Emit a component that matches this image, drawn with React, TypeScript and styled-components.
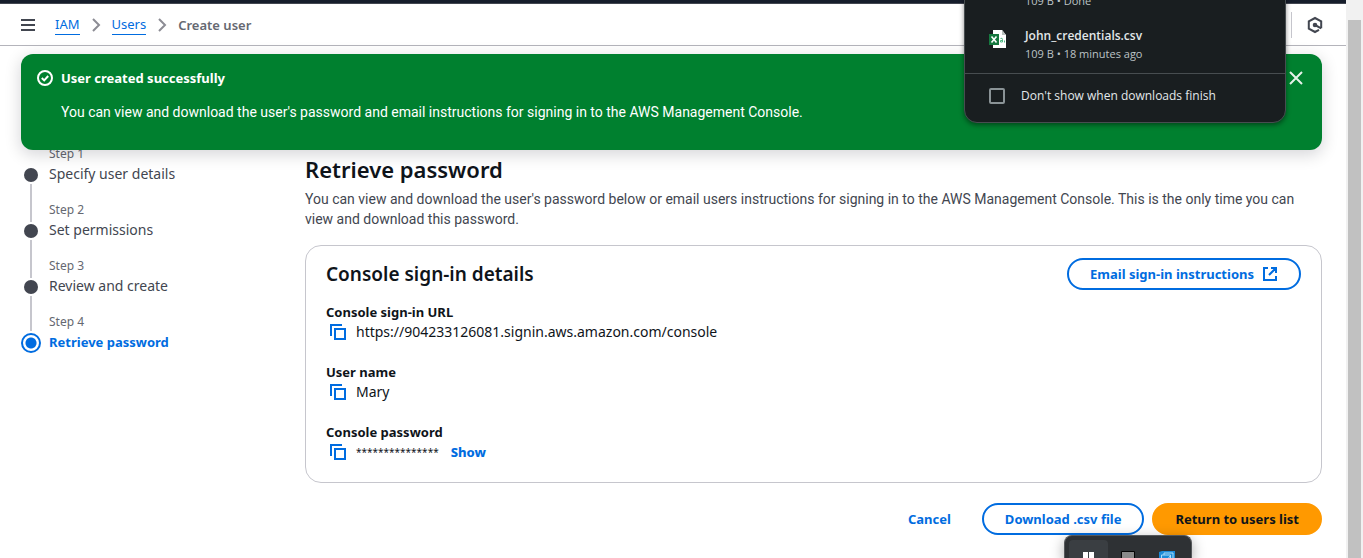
import React from 'react';
import styled, { createGlobalStyle, css } from 'styled-components';

const ui = `'Noto Sans', 'Open Sans', sans-serif`;
const prose = `Roboto, 'Noto Sans', sans-serif`;
const blue = '#006ce0';
const ink = '#0f141a';
const slate = '#424650';

const GlobalStyle = createGlobalStyle`
  *, *::before, *::after { box-sizing: border-box; }
  body { margin: 0; background: #fff; color: ${ink}; font: 400 14px/20px ${ui}; overflow: hidden; }
  h1, h2, p, dl, dd, dt, ol { margin: 0; padding: 0; }
  button { font-family: inherit; cursor: pointer; margin: 0; }
  svg { display: block; flex: none; }
`;

const Screen = styled.div`
  position: relative;
  display: flex;
  height: 100vh;
  overflow: hidden;
`;

const Page = styled.div`
  flex: 1;
  min-width: 0;
`;

const Scrollbar = styled.div`
  width: 17px;
  padding: 20px 2px 0;
  background: #f1f1f1;
`;

const ScrollThumb = styled.div`
  height: 100%;
  background: #c1c1c1;
`;

const GlobalNav = styled.div`
  height: 4px;
  background: #161d2b;
  border-bottom: 1px solid #424650;
`;

const Header = styled.header`
  display: flex;
  align-items: center;
  height: 42px;
  padding: 0 22px 0 20px;
  border-bottom: 1px solid #b4b4bb;
`;

const IconButton = styled.button`
  display: flex;
  padding: 0;
  border: 0;
  background: none;
  color: ${slate};
`;

const Breadcrumbs = styled.nav`
  display: flex;
  flex: 1;
  align-items: center;
  gap: 11px;
  margin-left: 19px;
  color: #8c8c94;
  font-size: 13px;
`;

const CrumbLink = styled.a`
  line-height: 19px;
  border-bottom: 1px solid ${blue};
  color: ${blue};
  text-decoration: none;
`;

const CurrentCrumb = styled.span`
  font-weight: 600;
  color: #656871;
`;

const HeaderTool = styled.div`
  display: flex;
  align-items: center;
  height: 26px;
  padding-left: 15px;
  border-left: 1px solid #c6c6cd;
`;

const Flash = styled.section`
  position: relative;
  z-index: 1;
  display: flex;
  align-items: flex-start;
  gap: 8px;
  min-height: 96px;
  margin: 8px 24px 0 21px;
  padding: 14px 18px 14px 16px;
  border-radius: 12px;
  background: #00802f;
  color: #fff;
  box-shadow: 0 4px 16px 1px rgba(0, 7, 22, 0.16);

  > svg, > button { margin-top: 2px; }
`;

const FlashBody = styled.div`
  flex: 1;
  display: flex;
  flex-direction: column;
  gap: 14px;
`;

const FlashTitle = styled.div`
  font-size: 13px;
  font-weight: 700;
`;

const FlashText = styled.p`
  font-family: ${prose};
`;

const Wizard = styled.div`
  display: flex;
  margin-top: -4px;
  padding: 0 24px 0 21px;
`;

const Steps = styled.ol`
  width: 284px;
  flex: none;
  list-style: none;
`;

const Step = styled.li`
  display: flex;
  gap: 8px;
  height: 58px;
  margin-bottom: -2px;
`;

const Track = styled.div`
  display: flex;
  flex-direction: column;
  align-items: center;
  gap: 2px;
  width: 20px;
  height: 56px;
`;

const Rail = styled.span<{ $length: number; $hidden?: boolean }>`
  width: 2px;
  height: ${p => p.$length}px;
  background: ${p => (p.$hidden ? 'transparent' : '#c6c6cd')};
`;

const Dot = styled.span<{ $active?: boolean }>`
  flex: none;
  border-radius: 50%;
  ${p =>
    p.$active
      ? css`
          width: 20px;
          height: 20px;
          border: 2px solid ${blue};
          background: radial-gradient(circle, ${blue} 5px, #fff 6px);
        `
      : css`
          width: 14px;
          height: 14px;
          background: ${slate};
        `}
`;

const StepText = styled.div<{ $active?: boolean }>`
  display: flex;
  flex-direction: column;
  gap: 2px;
  color: ${p => (p.$active ? blue : slate)};
  font-size: ${p => (p.$active ? 13 : 14)}px;
  font-weight: ${p => (p.$active ? 700 : 400)};
`;

const StepNumber = styled.span`
  color: #656871;
  font-size: 12px;
  font-weight: 400;
  line-height: 16px;
`;

const Main = styled.main`
  flex: 1;
  min-width: 0;
  padding-top: 8px;
`;

const Title = styled.h1`
  font-size: 22px;
  font-weight: 600;
  line-height: 30px;
`;

const Description = styled.p`
  margin: 5px 0 16px;
  color: ${slate};
  font-family: ${prose};
`;

const Card = styled.section`
  padding: 12px 20px 20px;
  border: 1px solid #c6c6cd;
  border-radius: 16px;
`;

const CardHeader = styled.div`
  display: flex;
  align-items: center;
  justify-content: space-between;
  margin-bottom: 12px;
`;

const CardTitle = styled.h2`
  font-size: 19px;
  font-weight: 600;
  line-height: 24px;
`;

const Fields = styled.dl`
  display: flex;
  flex-direction: column;
  gap: 20px;
`;

const Label = styled.dt`
  font-size: 13px;
  font-weight: 700;
`;

const Value = styled.dd`
  display: flex;
  align-items: center;
  gap: 10px;
  height: 20px;
  padding-left: 4px;
  overflow-wrap: anywhere;
`;

const CopyButton = styled(IconButton)`
  color: ${blue};
`;

const Password = styled.span`
  font-size: 10px;
`;

const Button = styled.button<{ $variant?: 'primary' | 'link' }>`
  display: flex;
  align-items: center;
  gap: 8px;
  height: 32px;
  padding: 0 21px;
  border: 2px solid ${blue};
  border-radius: 20px;
  background: #fff;
  color: ${blue};
  font-size: 13px;
  font-weight: 700;
  line-height: 20px;
  white-space: nowrap;
  ${p => p.$variant === 'primary' && css`border-color: #ff9900; background: #ff9900; color: ${ink};`}
  ${p => p.$variant === 'link' && css`border-color: transparent; background: transparent;`}
`;

const ShowButton = styled.button`
  padding: 0 2px;
  border: 0;
  background: none;
  color: ${blue};
  font-size: 13px;
  font-weight: 800;
  line-height: 20px;
`;

const Actions = styled.div`
  display: flex;
  justify-content: flex-end;
  gap: 8px;
  margin-top: 20px;
`;

const Downloads = styled.aside`
  position: absolute;
  z-index: 2;
  top: -9px;
  right: 77px;
  width: 322px;
  border: 1px solid #474d50;
  border-radius: 0 0 13px 13px;
  background: #191e20;
  color: #e3e8ea;
  font-family: 'Open Sans', 'Noto Sans', sans-serif;
  font-size: 12px;
  box-shadow: 0 2px 5px rgba(0, 0, 0, 0.45);
`;

const DownloadItem = styled.div`
  display: flex;
  align-items: flex-start;
  gap: 17px;
  height: 63px;
  padding: 17px 24px 0;

  > svg { margin-top: 2px; }
`;

const FileName = styled.div`
  font-weight: 600;
  line-height: 18px;
`;

const FileMeta = styled.div<{ $indent?: boolean }>`
  padding-left: ${p => (p.$indent ? 60 : 0)}px;
  color: #bcc3c6;
  font-size: 11px;
  line-height: 18px;
`;

const Option = styled.label`
  display: flex;
  align-items: center;
  gap: 16px;
  height: 49px;
  padding: 0 24px 4px;
  border-top: 1px solid #474d50;
`;

const Checkbox = styled.input`
  appearance: none;
  width: 16px;
  height: 16px;
  margin: 0;
  border: 2px solid #8a9396;
  border-radius: 2px;
`;

const TaskSwitcher = styled.div`
  position: absolute;
  z-index: 2;
  right: 171px;
  bottom: 0;
  display: flex;
  width: 128px;
  height: 23px;
  padding: 4px 4px 0;
  border: solid #55585b;
  border-width: 1px 1px 0;
  border-radius: 8px 8px 0 0;
  background: #2e3134;
  box-shadow: 0 4px 14px rgba(0, 0, 0, 0.35);
  overflow: hidden;
`;

const Task = styled.div<{ $selected?: boolean }>`
  display: flex;
  flex: 1;
  justify-content: center;
  padding-top: 11px;
  border-radius: 4px 4px 0 0;
  background: ${p => (p.$selected ? '#3a3e42' : 'transparent')};
`;

const Chevron = () => (
  <svg width="10" height="14" viewBox="0 0 10 14" fill="none" stroke="#8c8c94" strokeWidth="2">
    <path d="M2 1l6 6-6 6" />
  </svg>
);

const CopyIcon = () => (
  <svg width="16" height="16" viewBox="0 0 16 16" fill="none" stroke="currentColor" strokeWidth="2">
    <path d="M5 5h10v10H5z" />
    <path d="M1 12V1h11" />
  </svg>
);

const ExternalIcon = () => (
  <svg width="16" height="16" viewBox="0 0 16 16" fill="none" stroke="currentColor" strokeWidth="2">
    <path d="M6 2H2v12h12v-4M9 2h5v5M14 2L7 9" />
  </svg>
);

const steps = ['Specify user details', 'Set permissions', 'Review and create', 'Retrieve password'];

const CopyField = ({ label, children }: { label: string; children: React.ReactNode }) => (
  <div>
    <Label>{label}</Label>
    <Value>
      <CopyButton type="button" aria-label={`Copy ${label}`}>
        <CopyIcon />
      </CopyButton>
      {children}
    </Value>
  </div>
);

export default function App() {
  return (
    <Screen>
      <GlobalStyle />
      <Page>
        <GlobalNav />
        <Header>
          <IconButton type="button" aria-label="Open navigation">
            <svg width="16" height="14" viewBox="0 0 16 14" stroke="currentColor" strokeWidth="2">
              <path d="M1 2h14M1 7h14M1 12h14" />
            </svg>
          </IconButton>
          <Breadcrumbs aria-label="Breadcrumbs">
            <CrumbLink href="#iam">IAM</CrumbLink>
            <Chevron />
            <CrumbLink href="#users">Users</CrumbLink>
            <Chevron />
            <CurrentCrumb aria-current="page">Create user</CurrentCrumb>
          </Breadcrumbs>
          <HeaderTool>
            <IconButton type="button" aria-label="Open assistant">
              <svg width="17" height="18" viewBox="0 0 17 18" fill="none" stroke="currentColor" strokeWidth="2">
                <path d="M14.200 12.200V5.400L8 2 1.800 5.400v7.200L8 16l4-2.200" />
                <path d="M8 9l6.200 3.400" />
                <circle cx="8" cy="9" r="1.300" fill="currentColor" />
              </svg>
            </IconButton>
          </HeaderTool>
        </Header>

        <Flash role="status">
          <svg width="16" height="16" viewBox="0 0 16 16" fill="none" stroke="currentColor" strokeWidth="2">
            <circle cx="8" cy="8" r="7" />
            <path d="M4.8 8l2.4 2.4 4-4.4" />
          </svg>
          <FlashBody>
            <FlashTitle>User created successfully</FlashTitle>
            <FlashText>
              You can view and download the user's password and email instructions for signing in to the AWS Management
              Console.
            </FlashText>
          </FlashBody>
          <IconButton type="button" aria-label="Dismiss">
            <svg width="16" height="16" viewBox="0 0 16 16" fill="none" stroke="#e6f2ea" strokeWidth="2">
              <path d="M2 2l12 12M14 2L2 14" />
            </svg>
          </IconButton>
        </Flash>

        <Wizard>
          <Steps>
            {steps.map((name, i) => {
              const active = i === steps.length - 1;
              return (
                <Step key={name} aria-current={active ? 'step' : undefined}>
                  <Track>
                    <Rail $length={active ? 17 : 20} $hidden={i === 0} />
                    <Dot $active={active} />
                    {!active && <Rail $length={18} />}
                  </Track>
                  <StepText $active={active}>
                    <StepNumber>Step {i + 1}</StepNumber>
                    {name}
                  </StepText>
                </Step>
              );
            })}
          </Steps>

          <Main>
            <Title>Retrieve password</Title>
            <Description>
              You can view and download the user's password below or email users instructions for signing in to the AWS
              Management Console. This is the only time you can view and download this password.
            </Description>
            <Card>
              <CardHeader>
                <CardTitle>Console sign-in details</CardTitle>
                <Button type="button">
                  Email sign-in instructions
                  <ExternalIcon />
                </Button>
              </CardHeader>
              <Fields>
                <CopyField label="Console sign-in URL">https://904233126081.signin.aws.amazon.com/console</CopyField>
                <CopyField label="User name">Mary</CopyField>
                <CopyField label="Console password">
                  <Password>***************</Password>
                  <ShowButton type="button">Show</ShowButton>
                </CopyField>
              </Fields>
            </Card>
            <Actions>
              <Button type="button" $variant="link">Cancel</Button>
              <Button type="button">Download .csv file</Button>
              <Button type="button" $variant="primary">Return to users list</Button>
            </Actions>
          </Main>
        </Wizard>
      </Page>
      <Scrollbar>
        <ScrollThumb />
      </Scrollbar>

      <Downloads aria-label="Recent downloads">
        <FileMeta $indent>109 B • Done</FileMeta>
        <DownloadItem>
          <svg width="19" height="20" viewBox="0 0 19 20">
            <path d="M4 1h9l4 5v13H4z" fill="#fff" />
            <path d="M13 1l4 5h-4z" fill="#b9c0bd" />
            <path d="M11.500 9.500q2-1 2 1v2.500h-2v-1.500h2M15.500 11.500v2" stroke="#4fb783" fill="none" />
            <path d="M0 5h10v11H0z" fill="#16783f" />
            <path d="M2.500 7.500l5 6M7.500 7.500l-5 6" stroke="#fff" strokeWidth="1.600" />
          </svg>
          <div>
            <FileName>John_credentials.csv</FileName>
            <FileMeta>109 B • 18 minutes ago</FileMeta>
          </div>
        </DownloadItem>
        <Option>
          <Checkbox type="checkbox" />
          Don't show when downloads finish
        </Option>
      </Downloads>

      <TaskSwitcher>
        <Task $selected>
          <svg width="12" height="12" viewBox="0 0 12 12" fill="#fff">
            <path d="M0 1h5v11H0zM6 1h5v11H6z" />
          </svg>
        </Task>
        <Task>
          <svg width="14" height="12" viewBox="0 0 14 12">
            <path d="M.5 12V.5h13V12" fill="#8a8a8a" stroke="#050505" />
          </svg>
        </Task>
        <Task>
          <svg width="16" height="12" viewBox="0 0 16 12">
            <path d="M0 1l3-1h13v10l-2 2H0z" fill="#1b8ad8" />
            <path d="M2.500 12V4h9v8M5 4V2h9v7M5 8h4l2-3" fill="none" stroke="#a9dcf8" />
          </svg>
        </Task>
      </TaskSwitcher>
    </Screen>
  );
}
